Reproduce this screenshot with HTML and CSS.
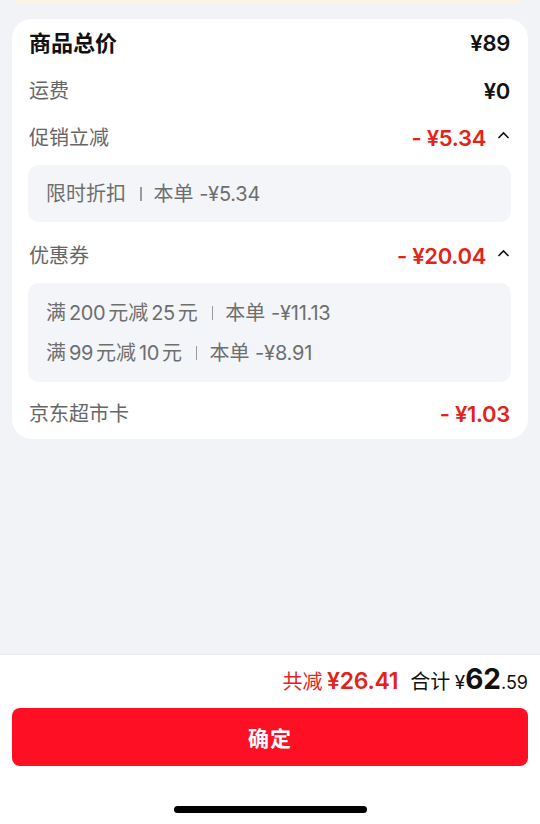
FILE: index.html
```html
<!DOCTYPE html>
<html lang="zh-CN">
<head>
<meta charset="utf-8">
<title>价格明细</title>
<link rel="stylesheet" href="styles.css">
</head>
<body>
<div class="page">
  <main class="main">
    <div class="strip"></div>
    <section class="card">
      <div class="row row-head">
        <span class="label-strong">商品总价</span>
        <span class="price-black">¥89</span>
      </div>
      <div class="row">
        <span class="label">运费</span>
        <span class="price-black">¥0</span>
      </div>
      <div class="row">
        <span class="label">促销立减</span>
        <span class="price-wrap"><span class="price-red">- ¥5.34</span>
          <svg class="caret" width="13" height="8" viewBox="0 0 13 8"><polyline points="1.5,7 6.5,2 11.5,7" fill="none" stroke="#111" stroke-width="1.6"/></svg>
        </span>
      </div>
      <div class="detail detail-one">
        <div class="dline">限时折扣<span class="sep"></span>本单 <span class="amt">-¥5.34</span></div>
      </div>
      <div class="row row-gap">
        <span class="label">优惠券</span>
        <span class="price-wrap"><span class="price-red">- ¥20.04</span>
          <svg class="caret" width="13" height="8" viewBox="0 0 13 8"><polyline points="1.5,7 6.5,2 11.5,7" fill="none" stroke="#111" stroke-width="1.6"/></svg>
        </span>
      </div>
      <div class="detail detail-two">
        <div class="dline">满<span class="n">200</span>元减<span class="n">25</span>元<span class="sep"></span>本单 <span class="amt">-¥11.13</span></div>
        <div class="dline">满<span class="n">99</span>元减<span class="n">10</span>元<span class="sep"></span>本单 <span class="amt">-¥8.91</span></div>
      </div>
      <div class="row row-last">
        <span class="label">京东超市卡</span>
        <span class="price-red">- ¥1.03</span>
      </div>
    </section>
  </main>
  <footer class="footer">
    <div class="total">
      <span class="saved"><span class="saved-label">共减</span> <span class="saved-num">¥26.41</span></span>
      <span class="sum"><span class="sum-label">合计</span> <span class="yen">¥</span><span class="big">62</span><span class="small">.59</span></span>
    </div>
    <button class="confirm">确定</button>
    <div class="home"></div>
  </footer>
</div>
</body>
</html>
```
FILE: styles.css
```css
* { box-sizing: border-box; }
html, body { margin: 0; padding: 0; }
body {
  background: #f2f3f7;
  font-family: "Inter", "Noto Sans CJK SC", sans-serif;
  color: #1a1a1a;
}
.page {
  width: 540px;
  height: 824px;
  display: flex;
  flex-direction: column;
}
.main { flex: 1; }
.strip {
  height: 3px;
  margin: 0 20px 0 15px;
  background: #fcf3e6;
}
.card {
  margin: 16px 12px 0 12px;
  background: #fff;
  border-radius: 20px;
  padding: 0 18px 2px 17px;
}
.row {
  height: 47px;
  display: flex;
  align-items: center;
  justify-content: space-between;
  line-height: 1;
}
.row-head { height: 48px; }
.row-gap { margin-top: 10px; }
.row-last { margin-top: 8px; }
.label-strong {
  font-size: 22px;
  font-weight: 700;
  color: #111;
}
.label {
  font-size: 20px;
  color: #666;
}
.price-black {
  font-size: 22px;
  font-weight: 600;
  color: #111;
  letter-spacing: -0.3px;
}
.price-wrap {
  display: flex;
  align-items: center;
}
.price-red {
  font-size: 22px;
  font-weight: 600;
  color: #e2231a;
  letter-spacing: -0.3px;
}
.caret {
  margin-left: 11px;
  margin-top: -5px;
}
.detail {
  margin: 4px -1px 0 -1px;
  background: #f4f5f8;
  border-radius: 11px;
  padding: 0 18px;
}
.detail-one { height: 57px; display: flex; align-items: center; }
.detail-two { padding-top: 10px; padding-bottom: 9px; }
.dline {
  font-size: 20px;
  color: #6e6e6e;
  line-height: 40px;
  display: flex;
  align-items: center;
  white-space: pre;
}
.n {
  margin: 0 3px;
  letter-spacing: -0.4px;
}
.amt { letter-spacing: -0.2px; }
.sep {
  display: inline-block;
  width: 1.5px;
  height: 14px;
  background: #9a9a9a;
  margin: 0 12px 0 14px;
}
.footer {
  background: #fff;
  border-top: 1px solid #e9e9ee;
  padding: 9px 12px 0 12px;
  height: 170px;
  display: flex;
  flex-direction: column;
  align-items: stretch;
}
.total {
  height: 30px;
  display: flex;
  justify-content: flex-end;
  align-items: baseline;
  gap: 12px;
  line-height: 30px;
}
.saved { color: #e2231a; }
.saved-label { font-size: 20px; }
.saved-num { font-size: 23px; font-weight: 600; letter-spacing: -0.3px; }
.sum { color: #111; }
.sum-label { font-size: 20px; }
.yen { font-size: 19px; }
.big { font-size: 28px; font-weight: 700; }
.small { font-size: 18px; }
.confirm {
  margin-top: 14px;
  height: 58px;
  border: none;
  border-radius: 8px;
  background: #fe0f23;
  color: #fff;
  font-family: "Noto Sans CJK SC", sans-serif;
  font-size: 21px;
  font-weight: 700;
  letter-spacing: 1px;
}
.home {
  align-self: center;
  margin-top: 40px;
  width: 193px;
  height: 7px;
  border-radius: 4px;
  background: #000;
}
```
